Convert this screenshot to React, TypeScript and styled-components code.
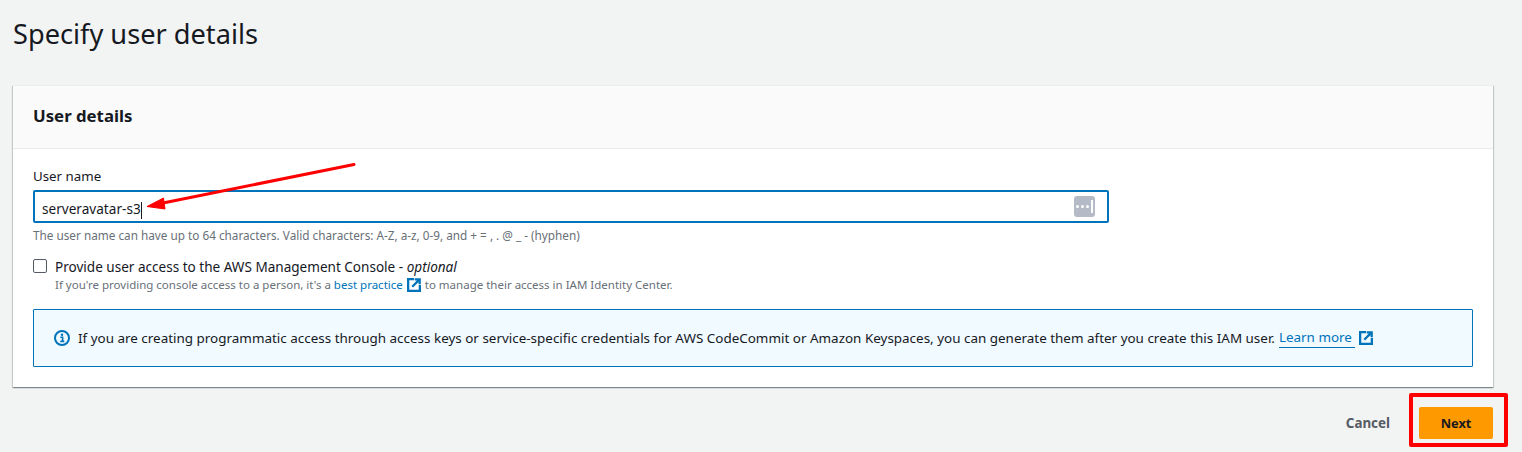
import React from "react"
import styled, { createGlobalStyle } from "styled-components"

const GlobalStyle = createGlobalStyle`
  html, body {
    margin: 0;
    padding: 0;
    background: #f2f3f3;
    font-family: "Noto Sans", "Liberation Sans", sans-serif;
    color: #16191f;
  }
`

const Page = styled.div`
  position: relative;
  width: 1522px;
  height: 452px;
  overflow: hidden;
  padding: 13px 29px 0 13px;
  box-sizing: border-box;
`

const Title = styled.h1`
  margin: 0;
  font-size: 27.2px;
  line-height: 42px;
  font-weight: 400;
  color: #16191f;
`

const Card = styled.section`
  margin-top: 30px;
  background: #fff;
  border-top: 1px solid #eaeded;
  box-shadow: 0 1px 1px 0 rgba(0, 28, 36, 0.3), 1px 1px 1px 0 rgba(0, 28, 36, 0.15), -1px 1px 1px 0 rgba(0, 28, 36, 0.15);
`

const CardHeader = styled.header`
  height: 63px;
  box-sizing: border-box;
  padding: 0 20px 3px;
  display: flex;
  align-items: center;
  background: #fafafa;
  border-bottom: 1px solid #eaeded;
`

const CardTitle = styled.h2`
  margin: 0;
  font-size: 16.8px;
  font-weight: 700;
  line-height: 22px;
`

const CardBody = styled.div`
  padding: 17px 20px 20px;
`

const Label = styled.label`
  display: block;
  font-size: 13.3px;
  line-height: 20px;
  color: #16191f;
`

const InputBox = styled.div`
  margin-top: 4px;
  width: 1076px;
  height: 33px;
  box-sizing: border-box;
  border: 2px solid #0073bb;
  border-radius: 2px;
  display: flex;
  align-items: center;
  justify-content: space-between;
  padding: 0 12px 0 7px;
  font-size: 13.6px;

  > span:first-child {
    padding-top: 5px;
  }
`

const Caret = styled.span`
  display: inline-block;
  width: 1px;
  height: 17px;
  background: #16191f;
  vertical-align: middle;
`

const KeyBadge = styled.span`
  width: 21px;
  height: 21px;
  border-radius: 3px;
  background: #b4bbc7;
  display: flex;
  align-items: center;
  justify-content: center;
  gap: 2px;
`

const Dot = styled.i`
  width: 3px;
  height: 3px;
  border-radius: 50%;
  background: #fff;
`

const BadgeBar = styled.i`
  width: 1.5px;
  height: 13px;
  background: #fff;
`

const Hint = styled.p`
  margin: 4px 0 0;
  font-size: 11.75px;
  line-height: 16px;
  color: #687078;
`

const CheckRow = styled.div`
  margin-top: 14px;
  display: grid;
  grid-template-columns: 14px 1fr;
  column-gap: 8px;
`

const CheckBox = styled.span`
  width: 14px;
  height: 14px;
  margin-top: 2px;
  box-sizing: border-box;
  border: 1px solid #545b64;
  border-radius: 2px;
  background: #fff;
`

const CheckLabel = styled.div`
  font-size: 13.55px;
  line-height: 20px;
  em { font-style: italic; }
`

const CheckHint = styled.div`
  grid-column: 2;
  font-size: 11.5px;
  line-height: 16px;
  color: #687078;
  display: flex;
  align-items: center;
`

const InlineLink = styled.a`
  color: #0073bb;
  text-decoration: none;
`

const InfoAlert = styled.div`
  margin-top: 16px;
  height: 58px;
  box-sizing: border-box;
  display: flex;
  align-items: center;
  padding: 0 20px;
  gap: 8px;
  background: #f1faff;
  border: 1px solid #0073bb;
  border-radius: 1px;
  font-size: 13.45px;
  white-space: nowrap;
`

const AlertText = styled.span`
  display: flex;
  align-items: center;
  gap: 4px;
`

const LearnMore = styled.a`
  color: #0073bb;
  text-decoration: none;
  padding: 0 3px 1px 0;
  border-bottom: 1px solid #0073bb;
`

const Actions = styled.div`
  display: flex;
  justify-content: flex-end;
  align-items: center;
  gap: 29px;
  margin-top: 20px;
`

const CancelButton = styled.button`
  border: none;
  background: none;
  padding: 0;
  font: 700 13.4px "Noto Sans", "Liberation Sans", sans-serif;
  color: #545b64;
`

const NextButton = styled.button`
  width: 74px;
  height: 32px;
  border: none;
  border-radius: 2px;
  background: #ff9900;
  font: 700 12.8px "Noto Sans", "Liberation Sans", sans-serif;
  color: #16191f;
`

const Highlight = styled.div`
  position: absolute;
  left: 1409px;
  top: 393px;
  width: 99px;
  height: 54px;
  box-sizing: border-box;
  border: 4px solid #ff0000;
  border-radius: 2px;
`

const ArrowOverlay = styled.svg`
  position: absolute;
  left: 0;
  top: 0;
  pointer-events: none;
`

const ExternalSvg = styled.svg`
  flex-shrink: 0;
`

const ExternalIcon = () => (
  <ExternalSvg width="14" height="14" viewBox="0 0 16 16" fill="none" stroke="#0073bb" strokeWidth="2.6">
    <path d="M8 1.3H1.3v13.4h13.4V8" />
    <path d="M6 10l7.5-7.6M8.8 1.5h5.7v5.7" />
  </ExternalSvg>
)

const SpacedExternal = styled.span`
  display: inline-flex;
  margin: 0 4px;
`

const InfoIcon = () => (
  <svg width="16" height="16" viewBox="0 0 16 16" fill="none" style={{ flexShrink: 0 }}>
    <circle cx="8" cy="8" r="7" stroke="#0073bb" strokeWidth="2" />
    <circle cx="8" cy="4.8" r="1.2" fill="#0073bb" />
    <path d="M6.3 7.2H8.6V11M6.3 11.4h4" stroke="#0073bb" strokeWidth="1.6" />
  </svg>
)

export default function App() {
  return (
    <Page>
      <GlobalStyle />
      <Title>Specify user details</Title>
      <Card>
        <CardHeader>
          <CardTitle>User details</CardTitle>
        </CardHeader>
        <CardBody>
          <Label>User name</Label>
          <InputBox>
            <span>serveravatar-s3<Caret /></span>
            <KeyBadge>
              <Dot /><Dot /><Dot /><BadgeBar />
            </KeyBadge>
          </InputBox>
          <Hint>The user name can have up to 64 characters. Valid characters: A-Z, a-z, 0-9, and + = , . @ _ - (hyphen)</Hint>
          <CheckRow>
            <CheckBox />
            <CheckLabel>Provide user access to the AWS Management Console - <em>optional</em></CheckLabel>
            <CheckHint>
              If you're providing console access to a person, it's a&nbsp;<InlineLink>best practice</InlineLink>
              <SpacedExternal><ExternalIcon /></SpacedExternal>
              to manage their access in IAM Identity Center.
            </CheckHint>
          </CheckRow>
          <InfoAlert>
            <InfoIcon />
            <AlertText>
              <span>If you are creating programmatic access through access keys or service-specific credentials for AWS CodeCommit or Amazon Keyspaces, you can generate them after you create this IAM user.</span>
              <LearnMore>Learn more</LearnMore>
              <ExternalIcon />
            </AlertText>
          </InfoAlert>
        </CardBody>
      </Card>
      <Actions>
        <CancelButton>Cancel</CancelButton>
        <NextButton>Next</NextButton>
      </Actions>
      <Highlight />
      <ArrowOverlay width="1522" height="452" viewBox="0 0 1522 452">
        <path d="M354 164.5L158 204" stroke="#ff0000" strokeWidth="3" strokeLinecap="round" />
        <path d="M147 206.5L163.5 198L165 209Z" fill="#ff0000" stroke="#ff0000" strokeWidth="1" />
      </ArrowOverlay>
    </Page>
  )
}
